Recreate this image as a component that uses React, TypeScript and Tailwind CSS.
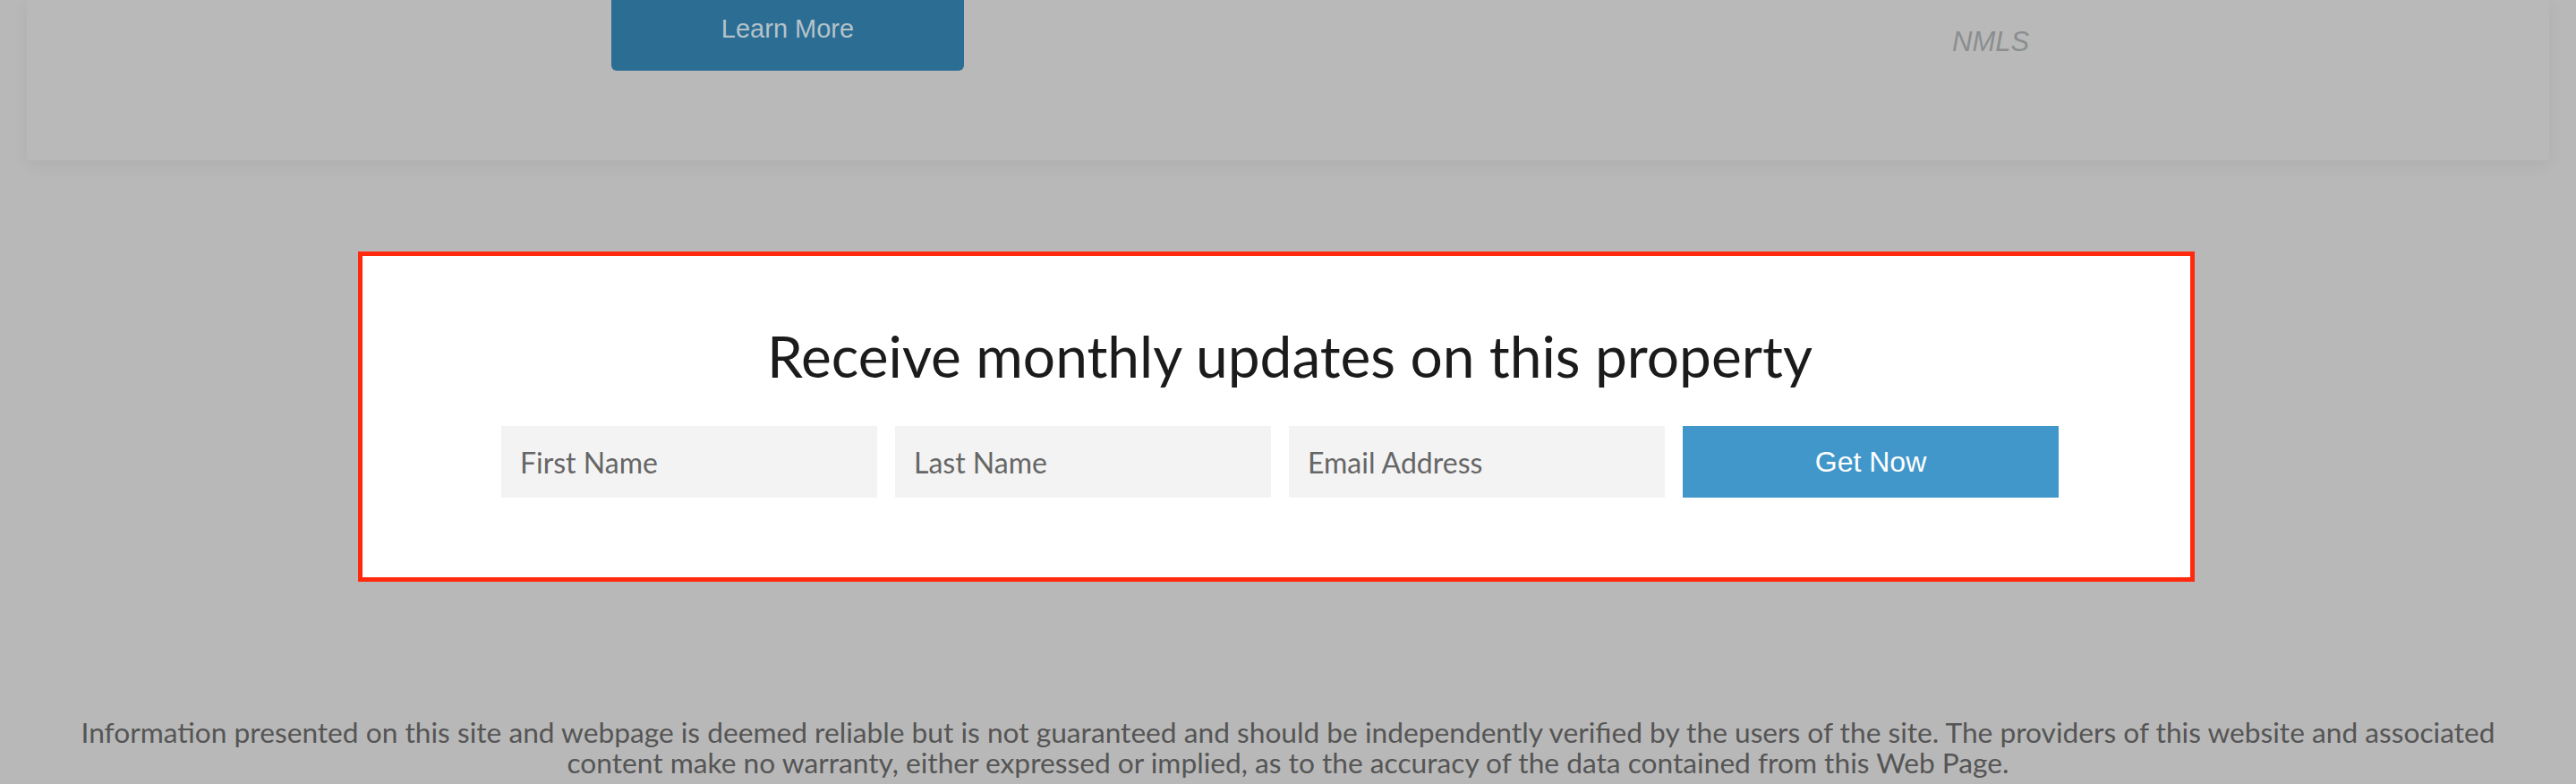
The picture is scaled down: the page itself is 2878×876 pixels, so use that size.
export default function App() {
  return (
    <div className="h-[876px] overflow-hidden bg-[#b8b8b8]">
      {/* top card, under the overlay */}
      <div className="mx-[30px] flex h-[179px] items-start bg-[#b9b9b9] shadow-[0_6px_18px_rgba(0,0,0,0.05)]">
        <button
          type="button"
          className="ml-[653px] -mt-[13px] flex h-[92px] w-[394px] items-center justify-center rounded-md bg-[#2b6d93] text-[29px] text-[#b5c2ca] [font-family:'Liberation_Sans',Arial,sans-serif]"
        >
          Learn More
        </button>
        <span className="ml-[1104px] mt-[29px] text-[31px] leading-[36px] italic text-[#8b8e90] [font-family:'Liberation_Sans',Arial,sans-serif]">
          NMLS
        </span>
      </div>

      {/* highlighted subscribe box */}
      <section className="ml-[400px] mt-[102px] w-[2052px] border-[5px] border-[#ff2a0e] bg-white pt-[73px] pb-[89px] [font-family:Lato,sans-serif]">
        <h2 className="pl-[30px] text-center text-[64px] leading-[77px] text-[#1b1b1b]">
          Receive monthly updates on this property
        </h2>
        <form className="mt-[40px] flex gap-[20px] pl-[155px]">
          {["First Name", "Last Name", "Email Address"].map((p) => (
            <input
              key={p}
              placeholder={p}
              className="h-[80px] w-[420px] bg-[#f3f3f3] px-[21px] text-[32px] text-[#555] outline-none placeholder:text-[#666]"
            />
          ))}
          <button
            type="button"
            className="h-[80px] w-[420px] bg-[#4197ca] text-[32px] text-white [font-family:'Liberation_Sans',Arial,sans-serif]"
          >
            Get Now
          </button>
        </form>
      </section>

      <p className="mt-[151px] px-[60px] text-center text-[31.7px] leading-[34px] text-[#555] [font-family:Lato,sans-serif]">
        Information presented on this site and webpage is deemed reliable but is not guaranteed and should be
        independently verified by the users of the site. The providers of this website and associated content make no
        warranty, either expressed or implied, as to the accuracy of the data contained from this Web Page.
      </p>
    </div>
  );
}
